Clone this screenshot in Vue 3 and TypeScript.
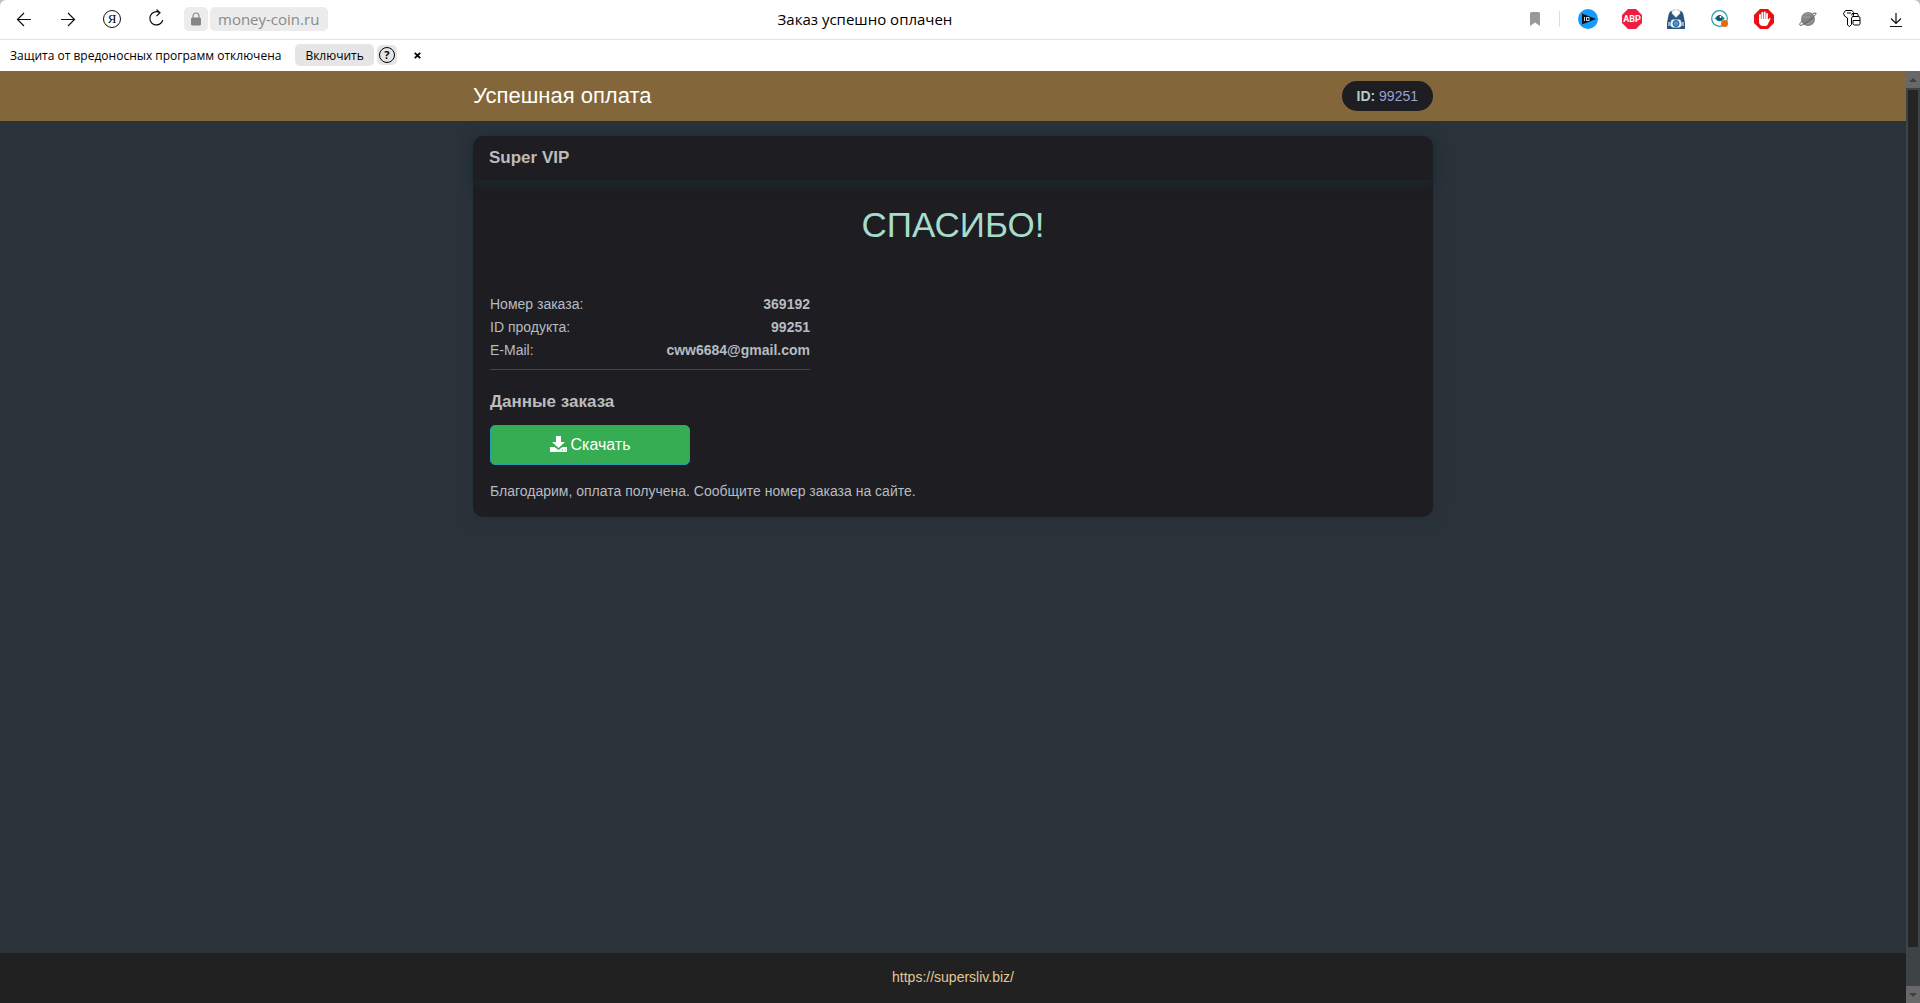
<script setup lang="ts">
interface OrderRow {
  label: string
  value: string
}

const rows: OrderRow[] = [
  { label: 'Номер заказа:', value: '369192' },
  { label: 'ID продукта:', value: '99251' },
  { label: 'E-Mail:', value: 'cww6684@gmail.com' },
]
</script>

<template>
  <div class="window">
    <div class="toolbar">
      <nav class="group">
        <button class="tool" aria-label="Назад">
          <svg width="20" height="20" viewBox="0 0 20 20" class="line"><path d="M17 10.500H3.500M10 4 3.500 10.500 10 17" /></svg>
        </button>
        <button class="tool" aria-label="Вперёд">
          <svg width="20" height="20" viewBox="0 0 20 20" class="line"><path d="M3 10.500h13.500M10 4l6.500 6.500L10 17" /></svg>
        </button>
        <button class="tool" aria-label="Яндекс">
          <span class="ya">Я</span>
        </button>
        <button class="tool" aria-label="Обновить">
          <svg width="20" height="22" viewBox="0 0 20 22" class="line"><path d="M13.500 4.500A6.600 6.600 0 1 0 16.800 12M10.500 1.500l3.500 3.200-3.500 3.500" /></svg>
        </button>
      </nav>
      <div class="omnibox">
        <div class="address">
          <button class="lock" aria-label="Соединение">
            <svg width="12" height="14" viewBox="0 0 12 14"><path d="M3 6V4a3 3 0 0 1 6 0v2" fill="none" stroke="#8a8a8a" stroke-width="1.200" /><rect x="1" y="5.500" width="10" height="8" rx="1.500" fill="#858585" /></svg>
          </button>
          <button class="url">money-coin.ru</button>
        </div>
        <span class="page-title">Заказ успешно оплачен</span>
        <button class="bookmark" aria-label="В закладки">
          <svg width="10" height="14" viewBox="0 0 10 14"><path d="M0 1.500Q0 0 1.500 0h7Q10 0 10 1.500V14L5 10.500 0 14z" fill="#999" /></svg>
        </button>
      </div>
      <span class="divider"></span>
      <div class="group">
        <button class="tool" aria-label="IQ">
          <svg width="20" height="20" viewBox="0 0 20 20"><circle cx="10" cy="10" r="10" fill="#149bfb" /><path d="M4 4.500 18 10 4 15.500z" fill="#0c1420" /><path d="M6.500 8v4" stroke="#c8d4e0" /><rect x="8.500" y="8.500" width="2.500" height="3" fill="none" stroke="#c8d4e0" /></svg>
        </button>
        <button class="tool" aria-label="Adblock Plus">
          <span class="abp">ABP</span>
        </button>
        <button class="tool" aria-label="Загрузчик">
          <svg width="18" height="20" viewBox="0 0 18 20"><path d="M4 2h10q2 1 2.500 4L18 14v6H0v-6L1.500 6Q2 3 4 2z" fill="#2b5580" /><path d="M7 0h4v2l2-.5v3L9 8.500l-4-4v-3l2 .5z" fill="#fff" stroke="#a9b2bc" stroke-width=".6" /><path d="M1 13h3v4H1zM14 13h3v4h-3z" fill="#8fb0cf" /><rect x="4" y="10.500" width="10" height="8" rx="2" fill="#f0f4f8" /><circle cx="9" cy="14.500" r="3" fill="#4b95da" stroke="#22598d" /></svg>
        </button>
        <button class="tool" aria-label="Просмотр">
          <svg width="18" height="18" viewBox="0 0 18 18"><circle cx="8.500" cy="8.500" r="7.800" fill="#fff" stroke="#259da5" stroke-width="1.200" /><path d="M3.500 8.500Q8.500 1.500 14 8.500 9 14 3.500 8.500z" fill="#19919b" /><circle cx="8.500" cy="8" r="2.800" fill="#184c62" /><circle cx="9.500" cy="7" r="1" fill="#fff" /><circle cx="13.500" cy="13.500" r="3.500" fill="#e86a0a" /></svg>
        </button>
        <button class="tool" aria-label="AdBlock">
          <svg width="20" height="20" viewBox="0 0 20 20"><path d="M6 0h8l6 6v8l-6 6H6l-6-6V6z" fill="#e90f12" /><path d="M6 11V5.800M8.300 10V3.800M10.700 10V3.300M13 11V4.800" stroke="#fff" stroke-width="1.800" stroke-linecap="round" /><path d="M5.100 10h8.800v1l1.300-1.800q1.500-.5 1.300.6L13.500 16q-.7 1-2 1H9q-3 0-3.900-3z" fill="#fff" /></svg>
        </button>
        <button class="tool" aria-label="Планета">
          <svg width="18" height="18" viewBox="0 0 18 18"><circle cx="9" cy="9" r="7" fill="#848484" /><path d="M5 4.500q4-2 7 0M4 7h7M8 14q4 0 6-4" stroke="#a0a0a0" fill="none" /><path d="M3.500 10.500Q-.5 14.500 1 15.300 3 16 10 10.500T17.200 3.200Q16.500 2.500 13.500 4" fill="none" stroke="#5d5d5d" stroke-width="1" /></svg>
        </button>
        <button class="tool" aria-label="Пароли">
          <svg width="18" height="18" viewBox="0 0 18 18" class="key"><path d="M2.500.5h6.500l1.500 2v3L8.500 8v6.500l-2 2-2-1.500V8L1.500 6 .5 3.500zM4 3h4M9 5.500V3.500h5.500l1 3M9.500 6.500h6q1.500 0 1.500 1.500v5.500q0 1.500-1.500 1.500h-4q-1.500 0-1.500-1.500V10.500h7" /></svg>
        </button>
        <button class="tool" aria-label="Загрузки">
          <svg width="14" height="18" viewBox="0 0 14 18" class="line"><path d="M7 3v10.500M2 8.500l5 5 5-5M1 16.500h12" /></svg>
        </button>
      </div>
    </div>

    <div class="infobar">
      <span>Защита от вредоносных программ отключена</span>
      <button class="enable">Включить</button>
      <button class="help" aria-label="Справка"><span>?</span></button>
      <button class="close" aria-label="Закрыть">
        <svg width="7" height="7" viewBox="0 0 7 7"><path d="M.8.8l5.400 5.400M6.200.8.800 6.200" stroke="#000" stroke-width="1.800" /></svg>
      </button>
    </div>

    <div class="viewport">
      <div class="page">
        <header class="top">
          <div class="container top-inner">
            <h1>Успешная оплата</h1>
            <span class="pill"><b>ID:</b> 99251</span>
          </div>
        </header>
        <main class="container main">
          <section class="card">
            <h2 class="card-head">Super VIP</h2>
            <div class="card-body">
              <p class="thanks">СПАСИБО!</p>
              <dl class="rows">
                <div v-for="row in rows" :key="row.label" class="row">
                  <dt>{{ row.label }}</dt>
                  <dd>{{ row.value }}</dd>
                </div>
              </dl>
              <h3>Данные заказа</h3>
              <button class="download">
                <svg width="17" height="16" viewBox="0 0 17 16"><path d="M6 0h5v6h4L8.500 12 2 6h4z" fill="#fff" /><path d="M0 11h4.500l4 3 4-3H17v5H0z" fill="#fff" /><path d="M12 14h1M14.500 14h1" stroke="#36ad52" /></svg>
                Скачать
              </button>
              <p class="note">Благодарим, оплата получена. Сообщите номер заказа на сайте.</p>
            </div>
          </section>
        </main>
        <footer class="footer"><a href="https://supersliv.biz/">https://supersliv.biz/</a></footer>
      </div>
      <div class="rail" aria-hidden="true">
        <span class="arrow"><svg width="8" height="4" viewBox="0 0 8 4"><path d="M0 4 4 0l4 4z" fill="#3c4144" /></svg></span>
        <div class="track"><div class="thumb"></div></div>
        <span class="arrow"><svg width="8" height="4" viewBox="0 0 8 4"><path d="M0 0h8L4 4z" fill="#3c4144" /></svg></span>
      </div>
    </div>
  </div>
</template>

<style>
body {
  margin: 0;
  background: #c9bdb4;
}
</style>

<style scoped>
* {
  box-sizing: border-box;
}
button {
  border: 0;
  padding: 0;
  background: none;
  font: inherit;
  color: inherit;
}
h1, h2, h3, p, dl, dd {
  margin: 0;
}
.window {
  display: flex;
  flex-direction: column;
  min-height: 100vh;
  border-radius: 6px 6px 0 0;
  overflow: hidden;
  background: #fff;
  font-family: "Open Sans", "Noto Sans", sans-serif;
  color: #000;
}
.toolbar {
  display: flex;
  align-items: center;
  height: 40px;
  padding: 0 2px 1px;
  border-bottom: 1px solid #e4e4e4;
}
.group {
  display: flex;
}
.tool {
  display: flex;
  align-items: center;
  justify-content: center;
  width: 44px;
  height: 32px;
}
.line {
  fill: none;
  stroke: #111;
  stroke-width: 1.200;
}
.key {
  fill: none;
  stroke: #000;
  stroke-width: 1;
}
.ya {
  width: 18px;
  height: 18px;
  border: 1px solid #111;
  border-radius: 50%;
  font: 13px/16px "Liberation Serif", serif;
  text-align: center;
}
.abp {
  width: 20px;
  height: 20px;
  background: #ef1c43;
  clip-path: polygon(30% 0, 70% 0, 100% 30%, 100% 70%, 70% 100%, 30% 100%, 0 70%, 0 30%);
  color: #fff;
  font: bold 9px/20px Roboto, sans-serif;
  text-align: center;
}
.omnibox {
  flex: 1;
  display: grid;
  grid-template-columns: 1fr auto 1fr;
  align-items: center;
  margin-left: 6px;
}
.address {
  display: flex;
  gap: 2px;
}
.lock, .url {
  height: 24px;
  border-radius: 5px;
  background: #ececec;
}
.lock {
  display: flex;
  align-items: center;
  justify-content: center;
  width: 24px;
}
.url {
  padding: 0 9px 0 8px;
  font-size: 15px;
  line-height: 24px;
  color: #8a8a8a;
}
.page-title {
  font-size: 15px;
  line-height: 24px;
}
.bookmark {
  display: flex;
  justify-self: end;
  margin-right: 6px;
}
.divider {
  width: 1px;
  height: 16px;
  margin: 0 6px 0 13px;
  background: #ddd;
}
.infobar {
  display: flex;
  align-items: center;
  height: 31px;
  padding: 0 10px 1px;
  font-size: 12px;
}
.enable {
  height: 22px;
  margin-left: 14px;
  padding: 0 10px;
  border-radius: 5px;
  background: #e5e5e5;
}
.help {
  display: flex;
  align-items: center;
  justify-content: center;
  width: 20px;
  height: 20px;
  margin-left: 3px;
  border-radius: 5px;
  background: #e5e5e5;
}
.help span {
  width: 16px;
  height: 16px;
  border: 1px solid #000;
  border-radius: 50%;
  font: bold 11px/14px "Open Sans", sans-serif;
}
.close {
  display: flex;
  margin-left: 17px;
}
.viewport {
  flex: 1;
  display: flex;
  font: 14px/23px "Liberation Sans", Arial, sans-serif;
}
.page {
  flex: 1;
  display: flex;
  flex-direction: column;
  background: #2b333a;
  color: #b5bcc2;
}
.container {
  width: 100%;
  max-width: 960px;
  margin: 0 auto;
}
.top {
  background: #836639;
}
.top-inner {
  display: flex;
  align-items: center;
  justify-content: space-between;
  height: 50px;
}
h1 {
  font-size: 22px;
  font-weight: 400;
  line-height: 30px;
  color: #fff;
}
.pill {
  padding: 0 15px;
  border-radius: 15px;
  background: #1e1d21;
  line-height: 30px;
  color: #98a2d3;
}
.pill b {
  color: #b3ccc2;
}
.main {
  flex: 1;
  padding-top: 15px;
}
.card {
  border-radius: 10px;
  background: #1e1d21;
  box-shadow: 0 0 14px #24303a;
}
.card-head {
  height: 44px;
  padding-left: 16px;
  border-radius: 10px 10px 0 0;
  box-shadow: 0 4px 12px #1b2a31;
  font-size: 17px;
  line-height: 43px;
  color: #bcbcbc;
}
.card-body {
  padding: 23px 17px 14px;
}
.thanks {
  margin-bottom: 46px;
  font-size: 35px;
  line-height: 44px;
  text-align: center;
  color: #a5dccb;
}
.rows {
  width: 320px;
  padding-bottom: 7px;
  border-bottom: 1px solid #46464a;
}
.row {
  display: flex;
  justify-content: space-between;
}
dd {
  font-weight: 700;
}
h3 {
  margin: 20px 0 11px;
  font-size: 17px;
  line-height: 24px;
  color: #bcbcbc;
}
.download {
  display: flex;
  align-items: center;
  justify-content: center;
  gap: 4px;
  width: 200px;
  height: 40px;
  padding-bottom: 2px;
  border: 1px solid #23a0a8;
  border-radius: 5px;
  background: #36ad52;
  font-size: 16px;
  color: #fff;
}
.note {
  margin-top: 15px;
}
.footer {
  height: 50px;
  background: #212121;
  line-height: 48px;
  text-align: center;
}
.footer a {
  color: #e3c795;
  text-decoration: none;
}
.rail {
  display: flex;
  flex-direction: column;
  width: 14px;
  background: #3e4446;
}
.arrow {
  display: flex;
  align-items: center;
  justify-content: center;
  height: 17px;
  background: #686868;
}
.track {
  flex: 1;
  display: flex;
  padding: 2px 2px 39px;
}
.thumb {
  flex: 1;
  background: #242424;
}
</style>
